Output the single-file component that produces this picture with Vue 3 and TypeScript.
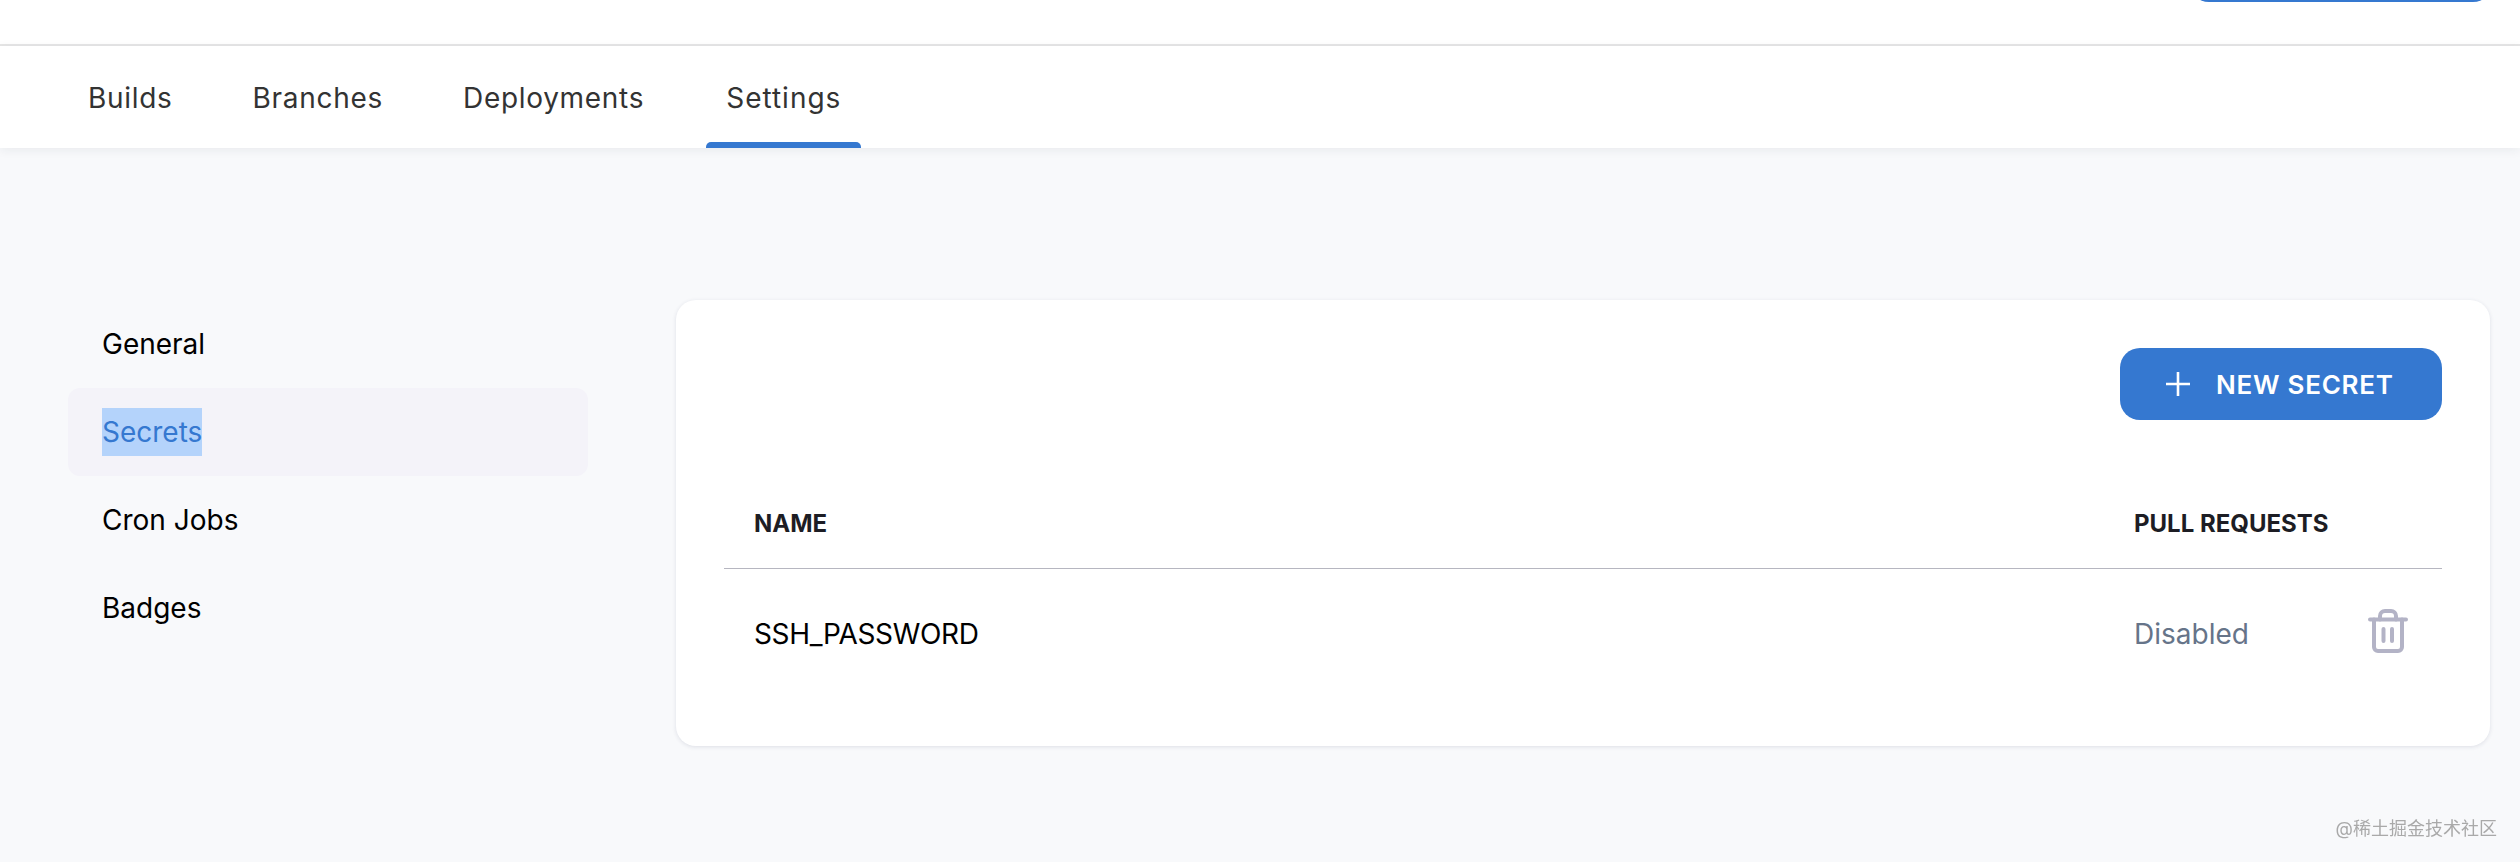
<script setup lang="ts">
const tabs = ['Builds', 'Branches', 'Deployments', 'Settings']
const menu = ['General', 'Secrets', 'Cron Jobs', 'Badges']
</script>

<template>
  <div class="page">
    <header class="top-bar">
      <button class="top-button" type="button" aria-label="Top action" />
    </header>

    <nav class="tabs">
      <a
        v-for="tab in tabs"
        :key="tab"
        class="tab"
        :class="{ 'tab-active': tab === 'Settings' }"
      >{{ tab }}</a>
    </nav>

    <main class="content">
      <aside class="side-menu">
        <a
          v-for="item in menu"
          :key="item"
          class="side-item"
          :class="{ 'side-item-active': item === 'Secrets' }"
        >
          <span class="side-label">{{ item }}</span>
        </a>
      </aside>

      <section class="card">
        <div class="card-actions">
          <button class="new-secret" type="button">
            <svg class="plus" viewBox="0 0 24 24" width="24" height="24" fill="none" stroke="currentColor" stroke-width="2.6">
              <path d="M12 0V24M0 12H24" />
            </svg>
            NEW SECRET
          </button>
        </div>

        <div class="row row-head">
          <span class="col-name">NAME</span>
          <span class="col-pull">PULL REQUESTS</span>
          <span class="col-action" />
        </div>

        <div class="row row-body">
          <span class="col-name secret-name">SSH_PASSWORD</span>
          <span class="col-pull muted">Disabled</span>
          <span class="col-action">
            <svg class="trash" viewBox="0 0 40 44" width="40" height="44" fill="none" stroke="#b3b3c6" stroke-width="4" stroke-linecap="round" stroke-linejoin="round">
              <path d="M2 10.500H38" />
              <path d="M12 10.500V7a5 5 0 0 1 5-5h6a5 5 0 0 1 5 5v3.500" />
              <path d="M6 10.500V38a4 4 0 0 0 4 4h20a4 4 0 0 0 4-4V10.500" />
              <path d="M15.500 20V32M24 20V32" />
            </svg>
          </span>
        </div>
      </section>
    </main>

    <div class="watermark">@稀土掘金技术社区</div>
  </div>
</template>

<style scoped>
.page {
  position: relative;
  height: 862px;
  overflow: hidden;
  background: #f8f9fb;
  font-family: Inter, "Noto Sans CJK SC", sans-serif;
  color: #000;
}

.top-bar {
  display: flex;
  justify-content: flex-end;
  height: 44px;
  padding-right: 27px;
  overflow: hidden;
  background: #fff;
  border-bottom: 2px solid #e6e6e6;
}

.top-button {
  width: 304px;
  height: 72px;
  margin-top: -70px;
  border: 0;
  border-radius: 20px;
  background: #3578d0;
}

.tabs {
  position: relative;
  display: flex;
  gap: 40px;
  height: 102px;
  padding-left: 68px;
  box-sizing: border-box;
  background: #fff;
  box-shadow: 0 2px 10px rgba(30, 40, 60, 0.07);
}

.tab {
  position: relative;
  padding: 0 20px;
  font-size: 28px;
  line-height: 104px;
  letter-spacing: 0.7px;
  color: #333;
}

.tab-active {
  margin-left: 2px;
  letter-spacing: 1px;
}

.tab-active::after {
  content: "";
  position: absolute;
  left: 0;
  right: 0;
  bottom: 0;
  height: 6px;
  border-radius: 5px 5px 0 0;
  background: #3578d0;
}

.content {
  display: flex;
  align-items: flex-start;
  gap: 88px;
  padding: 152px 30px 0 68px;
}

.side-menu {
  display: flex;
  flex-direction: column;
  flex: 0 0 520px;
}

.side-item {
  display: flex;
  align-items: center;
  height: 88px;
  padding-left: 34px;
  border-radius: 12px;
  font-size: 28px;
}

.side-label {
  line-height: 48px;
}

.side-item-active {
  background: #f4f3f9;
  color: #3578d0;
}

.side-item-active .side-label {
  background: #b4d3fb;
}

.card {
  flex: 1;
  height: 446px;
  box-sizing: border-box;
  padding: 48px 48px 0;
  border-radius: 20px;
  background: #fff;
  box-shadow: 0 1px 4px rgba(30, 40, 80, 0.12);
}

.card-actions {
  display: flex;
  justify-content: flex-end;
}

.new-secret {
  display: flex;
  align-items: center;
  gap: 26px;
  width: 322px;
  height: 72px;
  padding: 0 0 0 46px;
  border: 0;
  border-radius: 20px;
  background: #3578d0;
  color: #fff;
  font-family: inherit;
  font-size: 26px;
  font-weight: 600;
  letter-spacing: 0.75px;
}

.plus {
  flex: none;
}

.row {
  display: flex;
  align-items: center;
  padding-left: 30px;
}

.row-head {
  height: 149px;
  box-sizing: border-box;
  padding-top: 58px;
  border-bottom: 1px solid #b6b6c0;
  color: #1d1d24;
  font-size: 24px;
  font-weight: 700;
}

.row-body {
  height: 129px;
  font-size: 28px;
}

.secret-name {
  letter-spacing: -0.35px;
}

.col-name {
  flex: 1;
}

.col-pull {
  width: 234px;
}

.col-action {
  display: flex;
  width: 74px;
}

.trash {
  margin-top: -6px;
}

.muted {
  color: #667489;
}

.watermark {
  position: absolute;
  right: 23px;
  bottom: 22px;
  color: #a9a9a9;
  font-size: 18px;
  line-height: 22px;
  filter: blur(0.4px);
}
</style>

<style>
body {
  background: #f8f9fb;
}
</style>
